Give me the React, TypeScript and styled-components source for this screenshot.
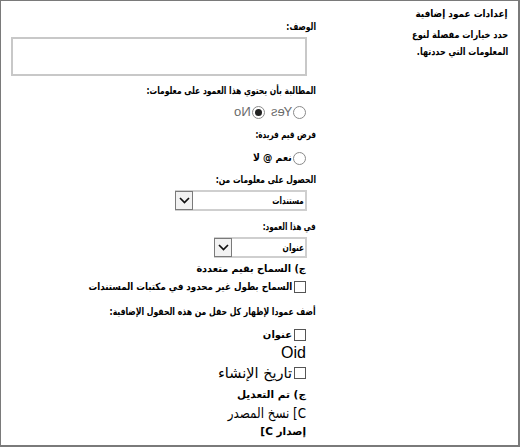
import React from 'react'
import styled, { createGlobalStyle } from 'styled-components'

const GlobalStyle = createGlobalStyle`
  html, body {
    margin: 0;
    padding: 0;
    background: #ffffff;
  }
  body {
    font-family: 'DejaVu Sans', sans-serif;
    color: #000000;
  }
`

const Frame = styled.div`
  box-sizing: border-box;
  width: 520px;
  height: 447px;
  border: 1px solid #7a7a7a;
  border-right-width: 2px;
  border-bottom-width: 2px;
  direction: rtl;
  display: flex;
  align-items: flex-start;
  overflow: hidden;
`

const Side = styled.div`
  width: 202px;
  flex-shrink: 0;
  padding: 5px 10px 0 0;
  box-sizing: border-box;
  display: flex;
  flex-direction: column;
  align-items: flex-start;
`

// the reference uses a much narrower Arabic face than DejaVu, so text is squeezed sideways
const Txt = styled.span<{ $size?: number; $bold?: boolean; $squeeze?: number }>`
  display: inline-block;
  font-size: ${(p) => p.$size ?? 10}px;
  line-height: 16px;
  font-weight: ${(p) => (p.$bold === false ? 'normal' : 'bold')};
  transform: scaleX(${(p) => p.$squeeze ?? 1});
  transform-origin: right center;
  white-space: nowrap;
`

const SideTitle = styled.div`
  display: flex;
  height: 16px;
  align-items: center;
`

const SideText = styled.div`
  margin-top: 5px;
  display: flex;
  flex-direction: column;
  align-items: flex-start;
  gap: 1px;
`

const Main = styled.div`
  flex: 1;
  padding-top: 18px;
  display: flex;
  flex-direction: column;
  align-items: flex-start;
`

const Label = styled.div<{ $top?: number }>`
  margin-top: ${(p) => p.$top ?? 0}px;
  height: 16px;
  display: flex;
  align-items: center;
`

const Row = styled.div<{ $top?: number }>`
  margin-top: ${(p) => p.$top ?? 0}px;
  margin-right: 10px;
  height: 16px;
  display: flex;
  align-items: center;
  white-space: nowrap;
`

const TextArea = styled.div`
  margin-top: 2px;
  margin-right: 9px;
  width: 296px;
  height: 39px;
  box-sizing: border-box;
  border: 2px solid #c8c8c8;
`

const Radio = styled.span<{ $checked?: boolean }>`
  width: 13px;
  height: 13px;
  box-sizing: border-box;
  border: 1px solid #8a8a8a;
  border-radius: 50%;
  display: inline-flex;
  align-items: center;
  justify-content: center;
  margin-left: 1px;
  flex-shrink: 0;
  &::after {
    content: '';
    width: 7px;
    height: 7px;
    border-radius: 50%;
    background: #222;
    display: ${(p) => (p.$checked ? 'block' : 'none')};
  }
`

const Mirrored = styled.span<{ $space?: number }>`
  display: inline-block;
  transform: scaleX(-1);
  margin-left: ${(p) => p.$space ?? 0}px;
  color: #6a6a6a;
  font-family: 'Liberation Sans', sans-serif;
  font-size: 13px;
  line-height: 16px;
`

const Check = styled.span`
  width: 12px;
  height: 12px;
  box-sizing: border-box;
  border: 1px solid #555;
  display: inline-block;
  margin-left: 2px;
  flex-shrink: 0;
`

const Latin = styled.span`
  font-family: 'Liberation Sans', sans-serif;
  font-size: 16px;
  line-height: 16px;
`

const Select = styled.div<{ $width: number }>`
  margin-top: 2px;
  margin-right: 9px;
  width: ${(p) => p.$width}px;
  height: 21px;
  box-sizing: border-box;
  border: 2px solid #cfcfcf;
  display: flex;
  align-items: center;
  justify-content: space-between;
  padding-right: 1px;
`

const SelectButton = styled.span`
  width: 18px;
  height: 19px;
  margin: -1px 0 -1px -2px;
  box-sizing: border-box;
  border: 1px solid #7a7a7a;
  background: #f2f2f2;
  display: flex;
  align-items: center;
  justify-content: center;
`

function Chevron() {
  return (
    <svg width="11" height="7" viewBox="0 0 11 7">
      <polyline points="1,1 5.5,5.5 10,1" fill="none" stroke="#111" strokeWidth="1.7" />
    </svg>
  )
}

const LABEL = 0.76

export default function App() {
  return (
    <>
      <GlobalStyle />
      <Frame>
        <Side>
          <SideTitle>
            <Txt $squeeze={0.89}>إعدادات عمود إضافية</Txt>
          </SideTitle>
          <SideText>
            <Txt $squeeze={0.82}>حدد خيارات مفصلة لنوع</Txt>
            <Txt $squeeze={0.8}>المعلومات التي حددتها.</Txt>
          </SideText>
        </Side>
        <Main>
          <Label>
            <Txt $squeeze={LABEL}>الوصف:</Txt>
          </Label>
          <TextArea />
          <Label $top={7}>
            <Txt $squeeze={LABEL}>المطالبة بأن يحتوي هذا العمود على معلومات:</Txt>
          </Label>
          <Row $top={5}>
            <Radio />
            <Mirrored $space={6}>Yes</Mirrored>
            <Radio $checked />
            <Mirrored>No</Mirrored>
          </Row>
          <Label $top={7}>
            <Txt $squeeze={0.72}>فرض قيم فريدة:</Txt>
          </Label>
          <Row $top={7}>
            <Radio />
            <Txt $squeeze={0.93}>نعم @ لا</Txt>
          </Row>
          <Label $top={6}>
            <Txt $squeeze={LABEL}>الحصول على معلومات من:</Txt>
          </Label>
          <Select $width={132}>
            <Txt $squeeze={0.72}>مستندات</Txt>
            <SelectButton>
              <Chevron />
            </SelectButton>
          </Select>
          <Label $top={8}>
            <Txt $squeeze={0.71}>في هذا العمود:</Txt>
          </Label>
          <Select $width={93}>
            <Txt $squeeze={0.74}>عنوان</Txt>
            <SelectButton>
              <Chevron />
            </SelectButton>
          </Select>
          <Row $top={3}>
            <Txt $squeeze={0.97}>ج) السماح بقيم متعددة</Txt>
          </Row>
          <Row $top={2}>
            <Check />
            <Txt $squeeze={0.87}>السماح بطول غير محدود في مكتبات المستندات</Txt>
          </Row>
          <Label $top={9}>
            <Txt $squeeze={0.77}>أضف عمودا لإظهار كل حقل من هذه الحقول الإضافية:</Txt>
          </Label>
          <Row $top={7}>
            <Check />
            <Txt>عنوان</Txt>
          </Row>
          <Row $top={2}>
            <Latin>Oid</Latin>
          </Row>
          <Row $top={4}>
            <Check />
            <Txt $size={14.5} $bold={false}>
              تاريخ الإنشاء
            </Txt>
          </Row>
          <Row $top={5}>
            <Txt $size={10.5}>ج) تم التعديل</Txt>
          </Row>
          <Row $top={3}>
            <Txt $size={14} $bold={false} $squeeze={0.85}>
              C] نسخ المصدر
            </Txt>
          </Row>
          <Row $top={2}>
            <Txt $size={10.5}>إصدار C]</Txt>
          </Row>
        </Main>
      </Frame>
    </>
  )
}
